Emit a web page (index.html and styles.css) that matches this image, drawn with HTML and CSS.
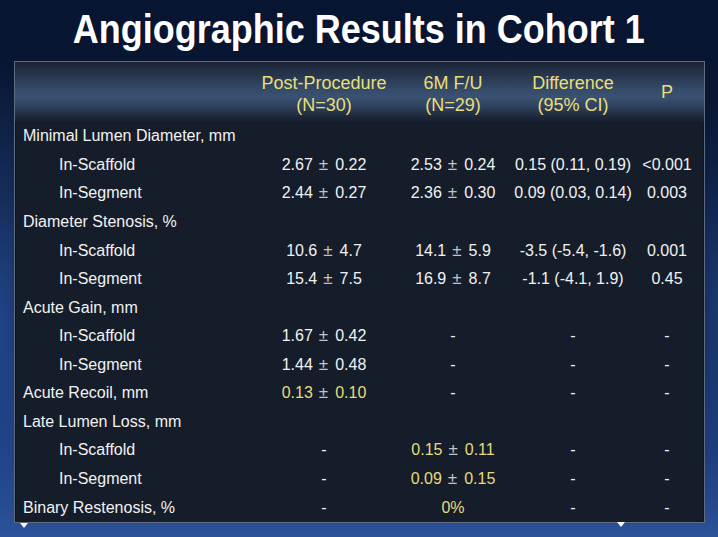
FILE: index.html
```html
<!DOCTYPE html>
<html>
<head>
<meta charset="utf-8">
<link rel="stylesheet" href="styles.css">
</head>
<body>
<div class="slide">
  <h1 class="title"><span class="title-text">Angiographic Results in Cohort 1</span></h1>
  <div class="table">
    <div class="head">
      <div class="hc"></div>
      <div class="hc"><span>Post-Procedure<br>(N=30)</span></div>
      <div class="hc"><span>6M F/U<br>(N=29)</span></div>
      <div class="hc"><span>Difference<br>(95% CI)</span></div>
      <div class="hc p"><span>P</span></div>
    </div>
    <div class="body">
      <div class="row"><div class="lab">Minimal Lumen Diameter, mm</div></div>
      <div class="row"><div class="lab sub">In-Scaffold</div><div class="c">2.67<i class="pm">±</i>0.22</div><div class="c">2.53<i class="pm">±</i>0.24</div><div class="c">0.15 (0.11, 0.19)</div><div class="c p">&lt;0.001</div></div>
      <div class="row"><div class="lab sub">In-Segment</div><div class="c">2.44<i class="pm">±</i>0.27</div><div class="c">2.36<i class="pm">±</i>0.30</div><div class="c">0.09 (0.03, 0.14)</div><div class="c p">0.003</div></div>
      <div class="row"><div class="lab">Diameter Stenosis, %</div></div>
      <div class="row"><div class="lab sub">In-Scaffold</div><div class="c">10.6<i class="pm">±</i>4.7</div><div class="c">14.1<i class="pm">±</i>5.9</div><div class="c">-3.5 (-5.4, -1.6)</div><div class="c p">0.001</div></div>
      <div class="row"><div class="lab sub">In-Segment</div><div class="c">15.4<i class="pm">±</i>7.5</div><div class="c">16.9<i class="pm">±</i>8.7</div><div class="c">-1.1 (-4.1, 1.9)</div><div class="c p">0.45</div></div>
      <div class="row"><div class="lab">Acute Gain, mm</div></div>
      <div class="row"><div class="lab sub">In-Scaffold</div><div class="c">1.67<i class="pm">±</i>0.42</div><div class="c">-</div><div class="c">-</div><div class="c p">-</div></div>
      <div class="row"><div class="lab sub">In-Segment</div><div class="c">1.44<i class="pm">±</i>0.48</div><div class="c">-</div><div class="c">-</div><div class="c p">-</div></div>
      <div class="row"><div class="lab">Acute Recoil, mm</div><div class="c hl">0.13<i class="pm">±</i>0.10</div><div class="c">-</div><div class="c">-</div><div class="c p">-</div></div>
      <div class="row"><div class="lab">Late Lumen Loss, mm</div></div>
      <div class="row"><div class="lab sub">In-Scaffold</div><div class="c">-</div><div class="c hl">0.15<i class="pm">±</i>0.11</div><div class="c">-</div><div class="c p">-</div></div>
      <div class="row"><div class="lab sub">In-Segment</div><div class="c">-</div><div class="c hl">0.09<i class="pm">±</i>0.15</div><div class="c">-</div><div class="c p">-</div></div>
      <div class="row"><div class="lab">Binary Restenosis, %</div><div class="c">-</div><div class="c hl">0%</div><div class="c">-</div><div class="c p">-</div></div>
    </div>
  </div>
  <span class="mark m1"></span>
  <span class="mark m2"></span>
</div>
</body>
</html>
```
FILE: styles.css
```css
* { box-sizing: border-box; }
html, body { margin: 0; padding: 0; }
body {
  width: 718px;
  height: 537px;
  overflow: hidden;
  font-family: "Liberation Sans", Arial, sans-serif;
  background: #0a1730;
}
.slide {
  position: relative;
  width: 718px;
  height: 537px;
  background:
    radial-gradient(ellipse 60px 260px at 0px 320px, rgba(45,90,175,0.6), rgba(45,90,175,0) 100%),
    radial-gradient(ellipse 40px 200px at 718px 300px, rgba(45,90,175,0.4), rgba(45,90,175,0) 100%),
    linear-gradient(to bottom, #081530 0%, #0a1834 35%, #10244c 62%, #1d3a78 84%, #2c5299 100%);
  display: flex;
  flex-direction: column;
}
.title {
  margin: 0;
  height: 61px;
  display: flex;
  justify-content: center;
  align-items: center;
  padding-bottom: 3px;
  color: #ffffff;
  font-size: 41px;
  font-weight: bold;
  white-space: nowrap;
}
.title-text {
  display: inline-block;
  transform: scaleX(0.878);
}
.table {
  margin: 0 13px 0 14px;
  height: 462px;
  border: 1px solid #5f6b7e;
  background: #151d2b;
  box-shadow: inset 1px 0 0 #0e1420, inset -1px 0 0 #0e1420;
}
.head, .row {
  display: grid;
  grid-template-columns: 249px 120px 138px 102px 78px;
}
.head {
  height: 60px;
  background: linear-gradient(to bottom, #1b2333 0%, #26344b 20%, #344a68 45%, #3a5273 58%, #2e405b 75%, #1d2738 92%, #171f2d 100%);
  color: #e9df7a;
  font-size: 18px;
}
.hc {
  display: flex;
  justify-content: center;
  align-items: center;
  text-align: center;
  line-height: 22px;
  white-space: nowrap;
  padding-top: 3px;
}
.hc.p { padding-left: 8px; padding-top: 0; }
.body { color: #f2f2f2; font-size: 16px; }
.row { height: 28.57px; align-items: center; }
.lab {
  padding-left: 8px;
  white-space: nowrap;
}
.lab.sub { padding-left: 44px; }
.c {
  display: flex;
  justify-content: center;
  align-items: baseline;
  white-space: nowrap;
}
.c.p { padding-left: 8px; }
.hl { color: #e6dc78; }
.pm {
  font-style: normal;
  font-size: 17px;
  color: #c4c4c4;
  margin: 0 7px 0 6px;
}
.mark {
  position: absolute;
  width: 0;
  height: 0;
  border-left: 4px solid transparent;
  border-right: 4px solid transparent;
  border-top: 5px solid #ffffff;
}
.m1 { left: 20px; top: 523px; }
.m2 { left: 617px; top: 522px; }
```
